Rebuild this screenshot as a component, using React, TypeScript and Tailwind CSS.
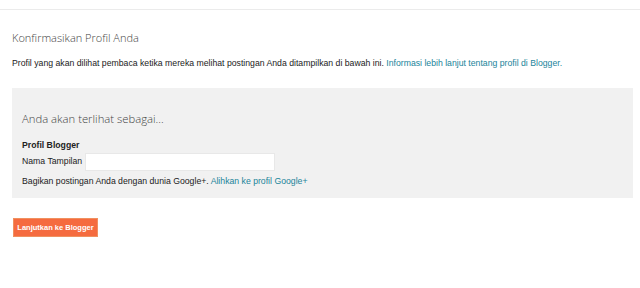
export default function App() {
  return (
    <div className="w-[640px] h-[288px] bg-white font-['Liberation_Sans',Arial,sans-serif] text-[#222] overflow-hidden">
      <div className="h-[10px] border-b border-[#ebebeb]" />
      <div className="px-[12px]">
        <h1 className="mt-[20px] font-['Open_Sans',sans-serif] font-light text-[11px] leading-[16px] text-[#444]">
          Konfirmasikan Profil Anda
        </h1>
        <p className="mt-[12px] text-[8.7px] leading-[10px]">
          Profil yang akan dilihat pembaca ketika mereka melihat postingan Anda ditampilkan di bawah ini.{" "}
          <a className="text-[#21849a]" href="#">
            Informasi lebih lanjut tentang profil di Blogger.
          </a>
        </p>
        <div className="mt-[20px] w-[621px] h-[110px] bg-[#f1f1f1] px-[10px] pt-[23px]">
          <h2 className="font-['Open_Sans',sans-serif] font-light text-[11.3px] leading-[16px] text-[#444]">
            Anda akan terlihat sebagai...
          </h2>
          <div className="mt-[13px] text-[8.7px] leading-[10px] font-bold">Profil Blogger</div>
          <div className="mt-[3px] flex items-center gap-[3px] text-[8.7px]">
            <span>Nama Tampilan</span>
            <input className="w-[190px] h-[18px] bg-white border border-[#e8e8e8] outline-none" />
          </div>
          <p className="mt-[5px] text-[8.7px] leading-[10px]">
            Bagikan postingan Anda dengan dunia Google+.{" "}
            <a className="text-[#21849a]" href="#">
              Alihkan ke profil Google+
            </a>
          </p>
        </div>
        <button className="mt-[20px] ml-[1px] h-[19px] w-[85px] bg-[#f56b3f] border border-[#f0905f] text-white text-[7.5px] font-bold">
          Lanjutkan ke Blogger
        </button>
      </div>
    </div>
  );
}
